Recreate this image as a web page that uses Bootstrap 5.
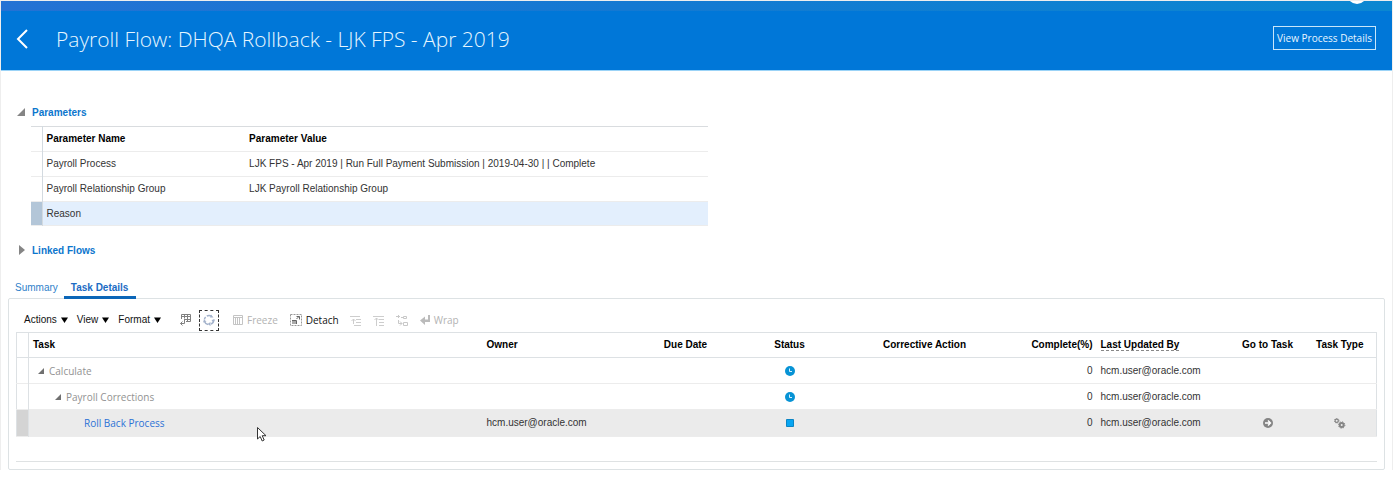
<!DOCTYPE html>
<html lang="en">
<head>
<meta charset="utf-8">
<meta name="viewport" content="width=device-width, initial-scale=1">
<title>Payroll Flow</title>
<link href="https://cdn.jsdelivr.net/npm/bootstrap@5.3.0/dist/css/bootstrap.min.css" rel="stylesheet">
<style>
  body { font: 10px/16px "Liberation Sans", Arial, sans-serif; color: #333; border-left: 1px solid #eee; border-right: 1px solid #eee; border-top: 1px solid #eee; }
  .segoe { font-family: "Open Sans", "Noto Sans", sans-serif; }
  svg { display: block; flex: none; }
  .top-strip { height: 10px; background: linear-gradient(90deg, #2472d4, #1479d2 45%, #0b87d1); overflow: hidden; padding-right: 25px; }
  .avatar { width: 20px; height: 20px; margin-top: -17px; background: #fff; }
  .title-bar { height: 60px; background: #0077d8; border-bottom: 1px solid #9bd3f7; padding: 0 16px 3px 15px; }
  .title-bar h1 { font-size: 21px; line-height: 28px; font-weight: 300; color: #e6f6ff; margin: 0; }
  .btn-process { font-size: 10px; line-height: 20px; height: 24px; padding: 0 3px; margin-bottom: 3px; color: #e9f6ff; border: 1px solid #c8e6fa; border-radius: 0; }
  .blank { background: none; border: 0; padding: 0; color: inherit; }
  .disclosure { color: #0c76cd; font-weight: 700; height: 16px; gap: 7px; }
  .sections { padding: 34px 0 0 15px; }
  .sections .table-box { width: 50%; margin: 5px 0 17px 15px; max-width: 677px; }
  .grid { width: 100%; table-layout: fixed; border-collapse: collapse; }
  .grid th { color: #000; font-weight: 700; }
  .grid th, .grid td { padding: 0 4px; white-space: nowrap; vertical-align: middle; }
  .params { border-top: 1px solid #d9dcdf; border-bottom: 1px solid #d0d8e0; }
  .params tr { height: 25px; border-bottom: 1px solid #ececec; }
  .params th:first-child, .params td:first-child { border-right: 1px solid #d3dae0; }
  .params .picked { background: #e3effd; height: 24px; }
  .params .picked td:first-child { background: #b3c6d8; }
  .tabs { padding: 0 0 0 14px; margin-top: 20px; gap: 6px; height: 20px; position: relative; z-index: 1; }
  .tabs button { color: #2f7fca; height: 20px; }
  .tabs .active { font-weight: 700; color: #1c6cc4; border-bottom: 3px solid #0b66b8; padding: 0 8px 0 7px; }
  .tabs button:not(.active) { border-bottom: 3px solid transparent; }
  .panel { margin: 0 7px 0 7px; border: 1px solid #dde2e4; border-radius: 2px; padding: 9px 7px 7px; margin-top: -1px; }
  .tools { height: 24px; padding-left: 8px; color: #111; }
  .tools .off { color: #b3b3b3; }
  .menu-group { gap: 9px; margin-right: 19px; }
  .menu-group button { gap: 4px; }
  .dash { width: 20px; height: 21px; border: 1px dashed #333 !important; margin: 0 14px 0 7px; }
  .detach { margin-right: 11px; }
  .tasks { border: 1px solid #dde1e4; margin-bottom: 24px; }
  .tasks tr { height: 26px; border-bottom: 1px solid #ececec; }
  .tasks thead tr { height: 25px; border-bottom-color: #dde1e4; }
  .tasks tr > :first-child { border-right: 1px solid #dde1e4; }
  .tasks .picked { background: #ebebeb; height: 27px; }
  .tasks .picked > :first-child { background: #d4d4d4; }
  .level-2 { padding-left: 17px; }
  .level-3 { padding-left: 51px; }
  .level-3 a { color: #2b72d6; }
  .node { color: #929292; }
  .dotted { border-bottom: 1px dashed #888; }
  .cursor-mark { position: absolute; left: 228px; top: 17px; z-index: 1; }
  .closing { border-top: 1px solid #dfe2e3; }
</style>
</head>
<body>
<div class="top-strip d-flex justify-content-end"><div class="avatar rounded-circle"></div></div>
<header class="title-bar d-flex align-items-center">
  <button class="blank" aria-label="Back"><svg width="12" height="20" viewBox="0 0 12 20" fill="none" stroke="#fff" stroke-width="2"><path d="M11 1 2 10l9 9"/></svg></button>
  <h1 class="segoe ms-4 ps-1 flex-grow-1">Payroll Flow: DHQA Rollback - LJK FPS - Apr 2019</h1>
  <button class="btn btn-process segoe">View Process Details</button>
</header>

<main>
  <section class="sections">
    <button class="blank disclosure d-flex align-items-center" aria-expanded="true">
      <svg width="9" height="10" viewBox="0 0 9 10"><path d="M9 0v8H1z" fill="#858585"/></svg>Parameters</button>
    <div class="table-box">
      <table class="grid params">
        <colgroup><col style="width:11px"><col style="width:30%"><col></colgroup>
        <thead><tr><th></th><th>Parameter Name</th><th>Parameter Value</th></tr></thead>
        <tbody>
          <tr><td></td><td>Payroll Process</td><td>LJK FPS - Apr 2019 | Run Full Payment Submission | 2019-04-30 | | Complete</td></tr>
          <tr><td></td><td>Payroll Relationship Group</td><td>LJK Payroll Relationship Group</td></tr>
          <tr class="picked"><td></td><td>Reason</td><td></td></tr>
        </tbody>
      </table>
    </div>
    <button class="blank disclosure d-flex align-items-center" aria-expanded="false">
      <svg width="9" height="12" viewBox="0 0 9 12"><path d="M3 0l6 5-6 5z" fill="#858585"/></svg>Linked Flows</button>
  </section>

  <div class="tabs d-flex" role="tablist">
    <button class="blank" role="tab">Summary</button>
    <button class="blank active" role="tab" aria-selected="true">Task Details</button>
  </div>

  <section class="panel">
    <div class="tools d-flex align-items-center">
      <div class="menu-group d-flex">
        <button class="blank d-flex align-items-center">Actions <svg width="7" height="6" viewBox="0 0 7 6"><path d="M0 .5h7L3.500 6z"/></svg></button>
        <button class="blank d-flex align-items-center">View <svg width="7" height="6" viewBox="0 0 7 6"><path d="M0 .5h7L3.500 6z"/></svg></button>
        <button class="blank d-flex align-items-center">Format <svg width="7" height="6" viewBox="0 0 7 6"><path d="M0 .5h7L3.500 6z"/></svg></button>
      </div>
      <button class="blank" aria-label="Export to Excel"><svg width="12" height="12" viewBox="0 0 12 12" fill="none" stroke="#808080"><path d="M1.500 5V.5h9v7H6M1.500 2.500h9M4.500.5v4M7.500.5v7M5 5.500h5.500"/><path d="M4.500 5v4.500H.5M2.500 7.500l-2 2 2 2"/></svg></button>
      <button class="blank dash d-flex align-items-center justify-content-center" aria-label="Refresh"><svg width="12" height="12" viewBox="0 0 12 12"><g fill="none" stroke="#a3b2cb" stroke-width="1.500"><path d="M3.800 2A4.600 4.600 0 0 1 8.500 2.200M10.600 5.500A4.600 4.600 0 0 1 8 10.100M5 10.500A4.600 4.600 0 0 1 1.500 7.500M1.400 5.500A4.600 4.600 0 0 1 2.600 2.900"/></g><path d="M8 .5l2.500 3H7zM12 5.500L10.500 8.500 8.500 6zM7.500 8v4L4.500 10zM0 8.500L1 5.500l2.500 2z" fill="#a3b2cb"/></svg></button>
      <button class="blank off segoe d-flex align-items-center gap-1 me-2 pe-1" disabled><svg width="10" height="10" viewBox="0 0 10 10" fill="none" stroke="#c4c4c4"><path d="M.5.5h9v9h-9zM.5 2.500h9M2.500 3v6M4.500 3v6M6.500 3v6"/></svg>Freeze</button>
      <button class="blank segoe d-flex align-items-center gap-1 detach"><svg width="12" height="12" viewBox="0 0 12 12" fill="none"><path d="M.5.500h11v11H.5z" stroke="#999" stroke-dasharray="2 1"/><path d="M2 6h4v4H2z" fill="#aaa"/><path d="M2 6.500h4.500V10M6.500 5L9 2.500M6.500 2.500h3v3" stroke="#666"/></svg>Detach</button>
      <button class="blank me-2 pe-1" disabled aria-label="Show as top"><svg width="11" height="11" viewBox="0 0 11 11" fill="none" stroke="#cdcdcd"><path d="M0 1.500h10M6 4.500h5M6 7.500h5M4 10.500h7M3.500 9V4M1.500 6l2-2 2 2"/></svg></button>
      <button class="blank me-2 pe-1" disabled aria-label="Go up"><svg width="11" height="11" viewBox="0 0 11 11" fill="none" stroke="#cdcdcd"><path d="M0 1.500h11M6 4.500h5M6 7.500h5M6 10.500h5M3.500 11V3M1.500 5l2-2 2 2"/></svg></button>
      <button class="blank me-2 pe-1" disabled aria-label="Go to top"><svg width="12" height="11" viewBox="0 0 12 11" fill="none" stroke="#c8c8c8"><path d="M0 1.500h4M2.500 0v3M5 2.500h2M7.500 1.500h3v2h-3zM7.500 7.500h4v3h-4zM2.500 5v3.500H6M4 6.500l2 2-2 2" /></svg></button>
      <button class="blank off segoe d-flex align-items-center gap-1" disabled><svg width="10" height="10" viewBox="0 0 10 10"><path d="M8 0h2v7H5v3L0 5.500 5 1.500V4.500h3z" fill="#bbb"/></svg>Wrap</button>
    </div>

    <table class="grid tasks">
      <colgroup><col style="width:12px"><col><col style="width:156px"><col style="width:94px"><col style="width:114px"><col style="width:156px"><col style="width:94px"><col style="width:135px"><col style="width:72px"><col style="width:73px"></colgroup>
      <thead>
        <tr><th></th><th>Task</th><th>Owner</th><th class="text-center">Due Date</th><th class="text-center">Status</th><th class="text-center">Corrective Action</th><th class="text-end">Complete(%)</th><th><span class="dotted">Last Updated By</span></th><th class="text-center">Go to Task</th><th class="text-center">Task Type</th></tr>
      </thead>
      <tbody>
        <tr><td></td>
          <td><div class="node segoe d-flex align-items-center ps-1"><svg class="me-1" width="8" height="6" viewBox="0 0 8 6"><path d="M7 0v6H1z" fill="#707070"/></svg>Calculate</div></td>
          <td></td><td></td>
          <td><svg class="mx-auto" width="10" height="10" viewBox="0 0 10 10"><circle cx="5" cy="5" r="5" fill="#0793d5"/><path d="M4.500 2.500v3H7" fill="none" stroke="#d5f0ff"/></svg></td>
          <td></td><td class="text-end">0</td><td>hcm.user@oracle.com</td><td></td><td></td></tr>
        <tr><td></td>
          <td><div class="level-2"><div class="node segoe d-flex align-items-center ps-1"><svg class="me-1" width="8" height="6" viewBox="0 0 8 6"><path d="M7 0v6H1z" fill="#707070"/></svg>Payroll Corrections</div></div></td>
          <td></td><td></td>
          <td><svg class="mx-auto" width="10" height="10" viewBox="0 0 10 10"><circle cx="5" cy="5" r="5" fill="#0793d5"/><path d="M4.500 2.500v3H7" fill="none" stroke="#d5f0ff"/></svg></td>
          <td></td><td class="text-end">0</td><td>hcm.user@oracle.com</td><td></td><td></td></tr>
        <tr class="picked"><td></td>
          <td class="position-relative"><div class="level-3"><a class="segoe text-decoration-none" href="#">Roll Back Process</a></div>
            <svg class="cursor-mark" width="10" height="15" viewBox="0 0 10 15"><path d="M.5.500v11.500l2.700-2.500 2 4.500 2-1-2-4.300H9z" fill="#fff" stroke="#333"/></svg></td>
          <td>hcm.user@oracle.com</td><td></td>
          <td><svg class="mx-auto" width="8" height="8" viewBox="0 0 8 8"><path d="M.5.500h7v7h-7z" fill="#08a5f2" stroke="#0b85c4"/></svg></td>
          <td></td><td class="text-end">0</td><td>hcm.user@oracle.com</td>
          <td><svg class="mx-auto" width="10" height="10" viewBox="0 0 10 10"><circle cx="5" cy="5" r="5" fill="#858585"/><path d="M2 5h5M5 2.500L7.500 5 5 7.500" fill="none" stroke="#fff" stroke-width="1.400"/></svg></td>
          <td><svg class="mx-auto" width="12" height="11" viewBox="0 0 12 11" fill="none" stroke="#858585"><circle cx="2.700" cy="2.700" r="1.600" stroke-width="1.200"/><circle cx="2.700" cy="2.700" r="2.300" stroke-dasharray=".9 .9"/><circle cx="7.700" cy="7" r="2" stroke-width="2"/><circle cx="7.700" cy="7" r="3.200" stroke-dasharray="1.200 1.300"/></svg></td></tr>
      </tbody>
    </table>
    <div class="closing"></div>
  </section>
</main>
<script src="https://cdn.jsdelivr.net/npm/bootstrap@5.3.0/dist/js/bootstrap.bundle.min.js"></script>
</body>
</html>
